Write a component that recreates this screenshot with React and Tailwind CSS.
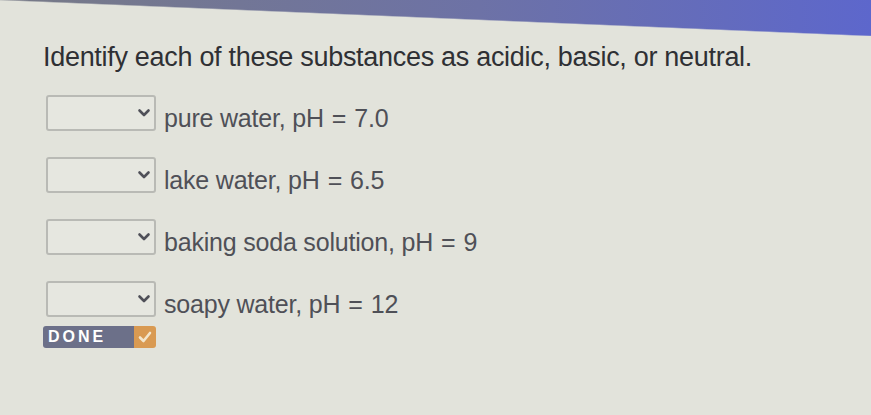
const rows = [
    { label: "pure water, ", value: "7.0" },
    { label: "lake water, ", value: "6.5" },
    { label: "baking soda solution, ", value: "9" },
    { label: "soapy water, ", value: "12" },
]

const Chevron = () => (
    <svg width="14" height="10" viewBox="0 0 14 10" fill="none">
        <path d="M2.5 2.5l4.5 4.5 4.5-4.5" stroke="#4f5058" strokeWidth="2.6" strokeLinecap="round" strokeLinejoin="round" />
    </svg>
)

const Row = ({ label, value }) => (
    <div className="flex items-end gap-[8px] h-[36px]">
        <div className="w-[110px] h-[36px] border-2 border-[#b9bab5] rounded-[3px] bg-[#e6e7e0] flex items-center justify-end pr-[3px]">
            <Chevron />
        </div>
        <span className="text-[25px] leading-[25px] text-[#4f5057] tracking-[-0.2px]">
            {label}pH<span className="mx-[8px]">=</span>{value}
        </span>
    </div>
)

export default function App() {
    return (
        <div
            className="w-[871px] h-[415px] overflow-hidden bg-[#e2e3db] flex flex-col"
            style={{ fontFamily: '"Liberation Sans", Arial, sans-serif' }}
        >
            <div className="h-[36px] shrink-0 bg-[linear-gradient(to_bottom_left,transparent_49%,#e2e3db_51%),linear-gradient(to_right,#777a86,#6d72a6_55%,#5d67cc)]"></div>
            <div className="pl-[43px] mt-[6px]">
                <h1 className="text-[27px] text-[#2f3034] tracking-[-0.3px] leading-[30px]">
                    Identify each of these substances as acidic, basic, or neutral.
                </h1>
                <div className="flex flex-col gap-[26px] mt-[23px] pl-[3px]">
                    {rows.map((r) => (
                        <Row key={r.label} {...r} />
                    ))}
                </div>
                <div className="mt-[9px] flex items-stretch h-[22px] w-[113px] rounded-[3px] overflow-hidden">
                    <div className="flex-1 bg-[#6c7089] text-white text-[16px] font-bold tracking-[3px] flex items-center pl-[5px]">
                        DONE
                    </div>
                    <div className="w-[22px] bg-[#d99a52] flex items-center justify-center">
                        <svg width="14" height="12" viewBox="0 0 14 12" fill="none">
                            <path d="M2 6.5l3.5 3.5L12 2" stroke="#f3e6cc" strokeWidth="2.6" strokeLinecap="round" strokeLinejoin="round" />
                        </svg>
                    </div>
                </div>
            </div>
        </div>
    )
}
